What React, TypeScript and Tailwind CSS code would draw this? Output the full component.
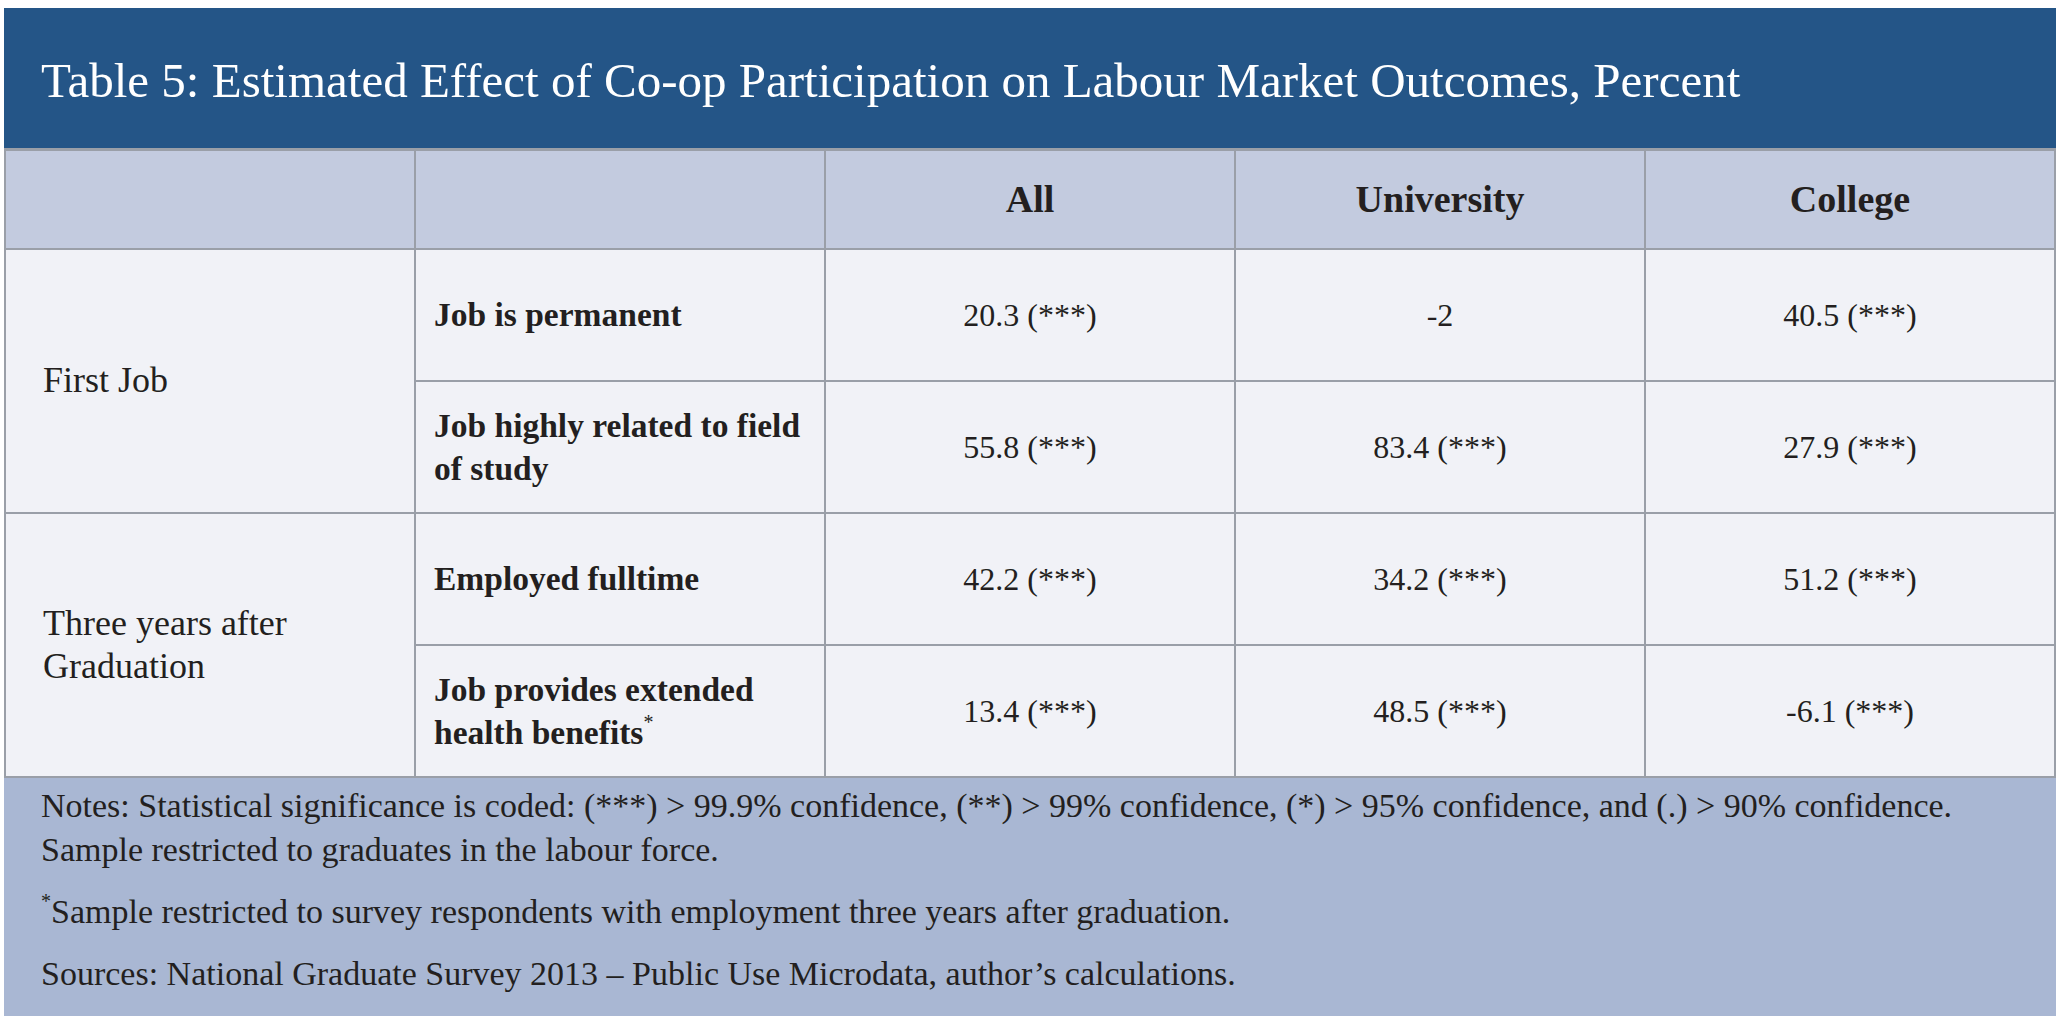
const rows = [
  {
    group: 'First Job',
    items: [
      { label: 'Job is permanent', values: ['20.3 (***)', '-2', '40.5 (***)'] },
      { label: 'Job highly related to field of study', values: ['55.8 (***)', '83.4 (***)', '27.9 (***)'] },
    ],
  },
  {
    group: 'Three years after Graduation',
    items: [
      { label: 'Employed fulltime', values: ['42.2 (***)', '34.2 (***)', '51.2 (***)'] },
      { label: 'Job provides extended health benefits', star: true, values: ['13.4 (***)', '48.5 (***)', '-6.1 (***)'] },
    ],
  },
];

export default function App() {
  return (
    <div className="min-h-screen bg-white pt-[8px] pr-[12px] pl-[4px] font-['Liberation_Serif',serif] text-[#231f20]">
      <div className="flex h-[140px] items-center bg-[#245587] px-[37px] pt-[6px] text-[49px] text-white">
        Table 5: Estimated Effect of Co-op Participation on Labour Market Outcomes, Percent
      </div>

      <table className="w-full table-fixed border-collapse">
        <colgroup>
          <col className="w-1/5" />
          <col className="w-1/5" />
          <col className="w-1/5" />
          <col className="w-1/5" />
          <col className="w-1/5" />
        </colgroup>
        <thead>
          <tr className="h-[99px] bg-[#c3cbdf] text-[38px] font-bold">
            <th className="border-2 border-t-[3px] border-[#9a9fa8]" />
            <th className="border-2 border-t-[3px] border-[#9a9fa8]" />
            <th className="border-2 border-t-[3px] border-[#9a9fa8] text-center">All</th>
            <th className="border-2 border-t-[3px] border-[#9a9fa8] text-center">University</th>
            <th className="border-2 border-t-[3px] border-[#9a9fa8] text-center">College</th>
          </tr>
        </thead>
        <tbody className="bg-[#f1f2f7]">
          {rows.map((g) =>
            g.items.map((r, i) => (
              <tr key={r.label} className="h-[132px]">
                {i === 0 && (
                  <td
                    rowSpan={g.items.length}
                    className="border-2 border-[#9a9fa8] pr-4 pl-[37px] text-[36px] leading-[43px]"
                  >
                    {g.group}
                  </td>
                )}
                <td className="border-2 border-[#9a9fa8] pr-1 pl-[18px] text-[33.5px] leading-[43px] font-bold">
                  {r.label}
                  {r.star && <span className="align-top text-[20px] leading-[22px] font-normal">*</span>}
                </td>
                {r.values.map((v, j) => (
                  <td key={j} className="border-2 border-[#9a9fa8] text-center text-[32px]">
                    {v}
                  </td>
                ))}
              </tr>
            )),
          )}
        </tbody>
      </table>

      <div className="bg-[#a9b7d3] px-[37px] pt-[6px] pb-[20px] text-[34px] leading-[44px]">
        <p>
          Notes: Statistical significance is coded: (***) &gt; 99.9% confidence, (**) &gt; 99% confidence, (*) &gt; 95%
          confidence, and (.) &gt; 90% confidence.
          <br />
          Sample restricted to graduates in the labour force.
        </p>
        <p className="mt-[18px]">
          <span className="align-top text-[20px] leading-[22px]">*</span>Sample restricted to survey respondents with
          employment three years after graduation.
        </p>
        <p className="mt-[18px]">Sources: National Graduate Survey 2013 – Public Use Microdata, author’s calculations.</p>
      </div>
    </div>
  );
}
